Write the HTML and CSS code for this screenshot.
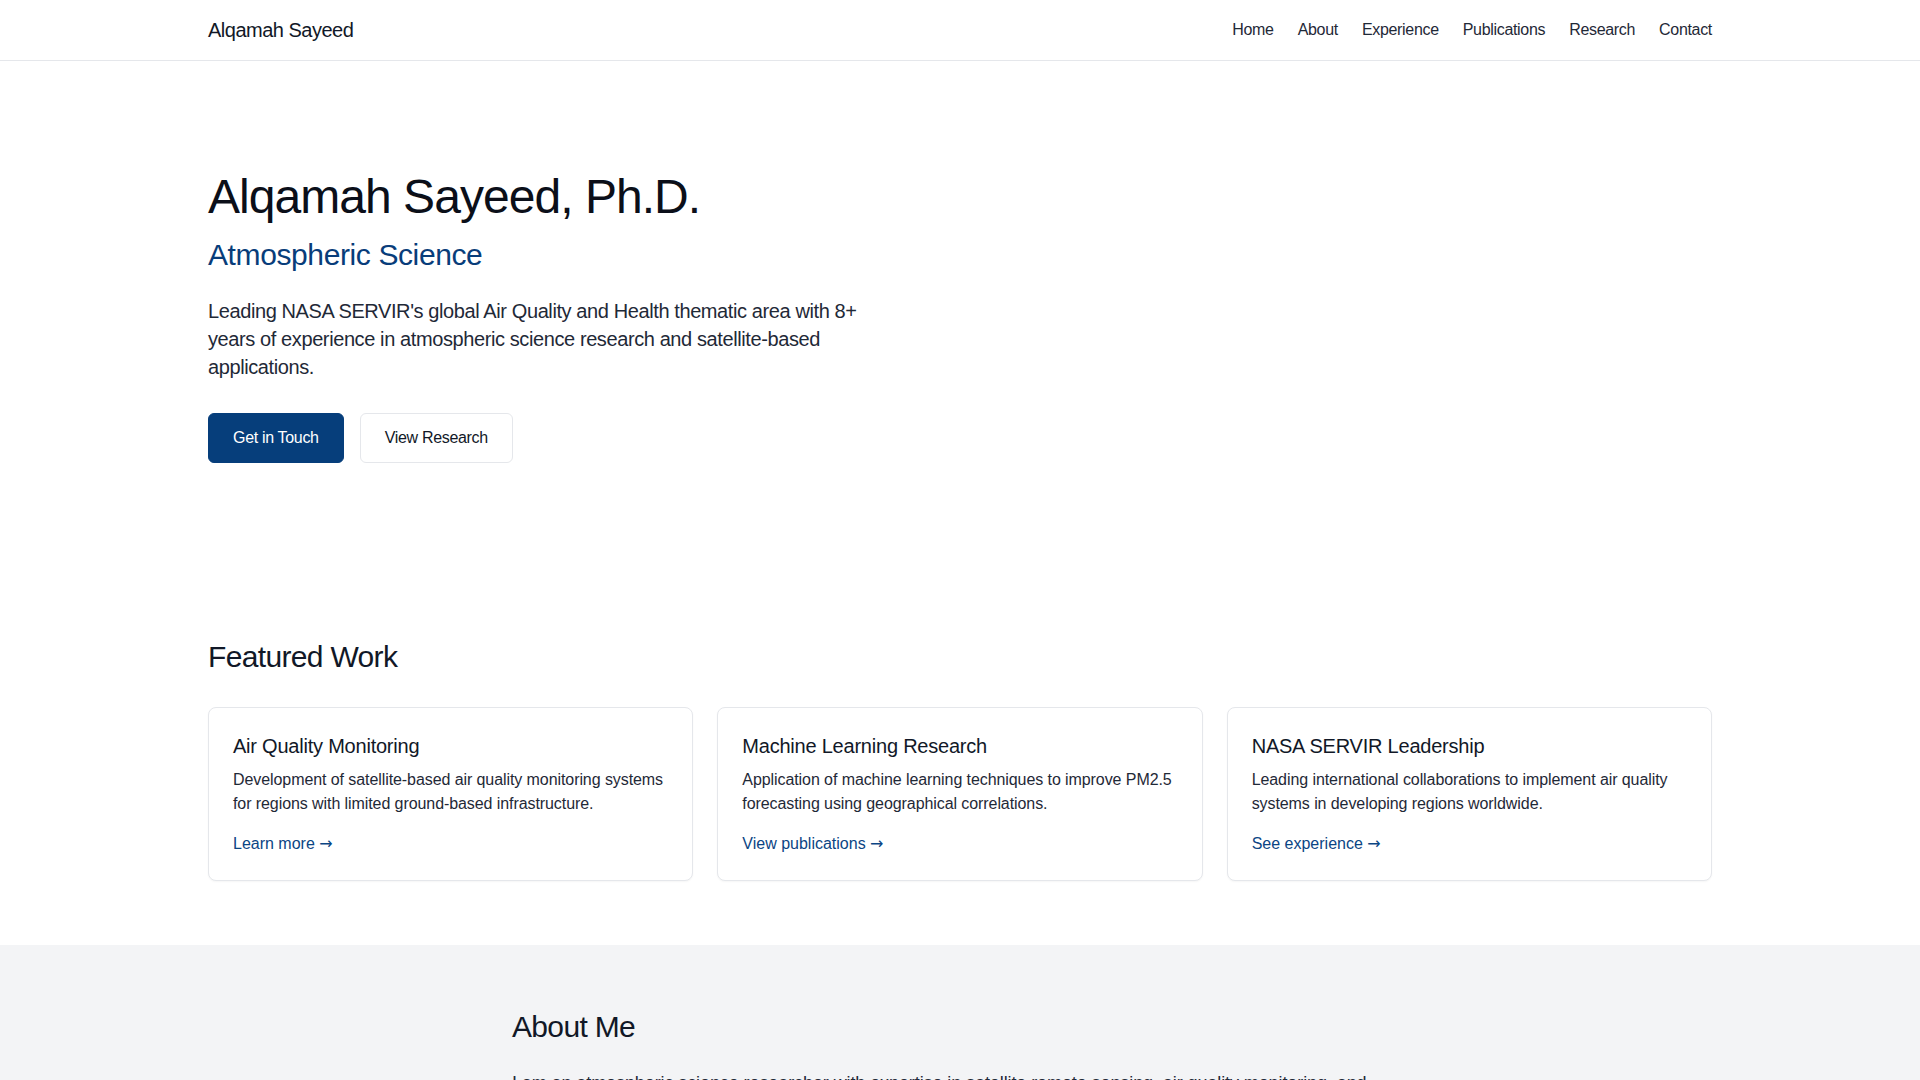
FILE: index.html
```html
<!DOCTYPE html>
<html lang="en">
<head>
<meta charset="utf-8">
<title>Alqamah Sayeed</title>
<link rel="stylesheet" href="styles.css">
</head>
<body>
<header class="site-header">
  <div class="container header-inner">
    <a class="brand" href="#">Alqamah Sayeed</a>
    <nav class="nav">
      <a href="#">Home</a>
      <a href="#">About</a>
      <a href="#">Experience</a>
      <a href="#">Publications</a>
      <a href="#">Research</a>
      <a href="#">Contact</a>
    </nav>
  </div>
</header>

<main>
  <section class="hero">
    <div class="container">
      <div class="hero-text">
        <h1 class="hero-title">Alqamah Sayeed, Ph.D.</h1>
        <h2 class="hero-subtitle">Atmospheric Science</h2>
        <p class="hero-lead">Leading NASA SERVIR's global Air Quality and Health thematic area with 8+ years of experience in atmospheric science research and satellite-based applications.</p>
        <div class="hero-actions">
          <a class="btn btn-primary" href="#">Get in Touch</a>
          <a class="btn btn-secondary" href="#">View Research</a>
        </div>
      </div>
    </div>
  </section>

  <section class="featured">
    <div class="container">
      <h2 class="section-title">Featured Work</h2>
      <div class="cards">
        <article class="card">
          <h3 class="card-title">Air Quality Monitoring</h3>
          <p class="card-text">Development of satellite-based air quality monitoring systems for regions with limited ground-based infrastructure.</p>
          <a class="card-link" href="#">Learn more <span class="arrow">→</span></a>
        </article>
        <article class="card">
          <h3 class="card-title">Machine Learning Research</h3>
          <p class="card-text">Application of machine learning techniques to improve PM2.5 forecasting using geographical correlations.</p>
          <a class="card-link" href="#">View publications <span class="arrow">→</span></a>
        </article>
        <article class="card">
          <h3 class="card-title">NASA SERVIR Leadership</h3>
          <p class="card-text">Leading international collaborations to implement air quality systems in developing regions worldwide.</p>
          <a class="card-link" href="#">See experience <span class="arrow">→</span></a>
        </article>
      </div>
    </div>
  </section>

  <section class="about">
    <div class="about-inner">
      <h2 class="section-title about-title">About Me</h2>
      <p class="about-text">I am an atmospheric science researcher with expertise in satellite remote sensing, air quality monitoring, and machine learning applications for environmental health.</p>
    </div>
  </section>
</main>
</body>
</html>
```

FILE: styles.css
```css
* { box-sizing: border-box; }

html, body {
  margin: 0;
  padding: 0;
}

body {
  font-family: "Liberation Sans", Arial, sans-serif;
  color: #111827;
  background: #ffffff;
}

a { text-decoration: none; color: inherit; }

h1, h2, h3, p { margin: 0; font-weight: 400; }

.container {
  max-width: 1536px;
  margin: 0 auto;
  padding: 0 16px;
}

.site-header {
  border-bottom: 1px solid #e5e7eb;
  background: #ffffff;
}

.header-inner {
  display: flex;
  align-items: center;
  justify-content: space-between;
  padding-top: 16px;
  padding-bottom: 16px;
}

.brand {
  font-size: 20px;
  line-height: 28px;
  letter-spacing: -0.025em;
  color: #111827;
}

.nav {
  display: flex;
  gap: 24px;
  font-size: 16px;
  line-height: 24px;
  letter-spacing: -0.02em;
  color: #1f2937;
}

.hero {
  padding: 112px 0;
}

.hero-title {
  font-size: 48px;
  line-height: 48px;
  letter-spacing: -0.02em;
  color: #0b0f19;
  margin-bottom: 16px;
}

.hero-subtitle {
  font-size: 30px;
  line-height: 36px;
  letter-spacing: -0.013em;
  color: #083d7a;
  margin-bottom: 24px;
}

.hero-lead {
  font-size: 20px;
  line-height: 28px;
  letter-spacing: -0.02em;
  color: #1f2937;
  max-width: 672px;
  margin-bottom: 32px;
}

.hero-actions {
  display: flex;
  gap: 16px;
}

.btn {
  display: inline-block;
  font-size: 16px;
  line-height: 24px;
  letter-spacing: -0.02em;
  padding: 12px 24px;
  border-radius: 6px;
  border: 1px solid transparent;
}

.btn-primary {
  background: #063e7b;
  border-color: #063e7b;
  color: #ffffff;
}

.btn-secondary {
  background: #ffffff;
  border-color: #e5e7eb;
  color: #111827;
}

.featured {
  padding: 64px 0;
}

.section-title {
  font-size: 30px;
  line-height: 36px;
  letter-spacing: -0.022em;
  color: #111827;
  margin-bottom: 32px;
}

.cards {
  display: grid;
  grid-template-columns: repeat(3, 1fr);
  gap: 24px;
}

.card {
  border: 1px solid #e5e7eb;
  border-radius: 8px;
  padding: 24px;
  background: #ffffff;
  box-shadow: 0 1px 2px rgba(0, 0, 0, 0.04);
}

.card-title {
  font-size: 20px;
  line-height: 28px;
  letter-spacing: -0.011em;
  color: #111827;
  margin-bottom: 8px;
}

.card-text {
  font-size: 16px;
  line-height: 24px;
  letter-spacing: -0.005em;
  color: #1f2937;
  margin-bottom: 16px;
}

.card-link {
  font-size: 16px;
  line-height: 24px;
  color: #0b4584;
}

.arrow {
  font-family: "DejaVu Sans", sans-serif;
  font-size: 16px;
  line-height: 24px;
}

.about {
  background: #f3f4f6;
  padding: 64px 0;
}

.about-inner {
  max-width: 896px;
  margin: 0 auto;
}

.about-title {
  margin-bottom: 24px;
}

.about-text {
  font-size: 18px;
  line-height: 28px;
  letter-spacing: -0.005em;
  color: #1f2937;
}
```
